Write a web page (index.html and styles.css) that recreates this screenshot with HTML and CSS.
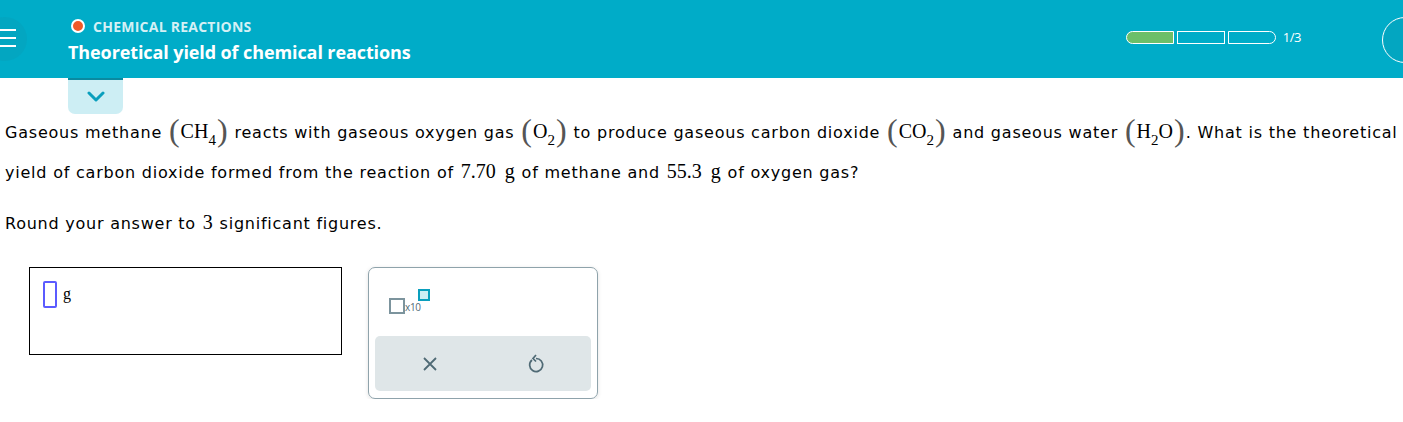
FILE: index.html
```html
<!DOCTYPE html>
<html>
<head>
<meta charset="utf-8">
<link rel="stylesheet" href="styles.css">
</head>
<body>
<header class="topbar">
  <div class="menu">
    <div class="menu-circle"></div>
    <div class="menu-lines"><span></span><span></span><span></span></div>
  </div>
  <div class="titles">
    <div class="topic"><span class="dot"></span>CHEMICAL REACTIONS</div>
    <div class="title">Theoretical yield of chemical reactions</div>
  </div>
  <div class="progress">
    <div class="seg seg-first done"></div>
    <div class="seg"></div>
    <div class="seg seg-last"></div>
    <span class="count">1/3</span>
  </div>
  <div class="avatar"></div>
</header>
<div class="tab">
  <svg width="20" height="12" viewBox="0 0 20 12"><path d="M3 2 L10 9 L17 2" fill="none" stroke="#0a9fbd" stroke-width="3" stroke-linecap="round" stroke-linejoin="round"/></svg>
</div>
<main class="content">
  <p class="question">Gaseous methane <span class="f"><span class="par">(</span>CH<sub>4</sub><span class="par">)</span></span> reacts with gaseous oxygen gas <span class="f"><span class="par">(</span>O<sub>2</sub><span class="par">)</span></span> to produce gaseous carbon dioxide <span class="f"><span class="par">(</span>CO<sub>2</sub><span class="par">)</span></span> and gaseous water <span class="f"><span class="par">(</span>H<sub>2</sub>O<span class="par">)</span></span>. What is the theoretical yield of carbon dioxide formed from the reaction of <span class="m">7.70 g</span> of methane and <span class="m">55.3 g</span> of oxygen gas?</p>
  <p class="round">Round your answer to <span class="m">3</span> significant figures.</p>
  <div class="answer-row">
    <div class="answer">
      <span class="cursor"></span><span class="unit">g</span>
    </div>
    <div class="keypad">
      <div class="sci">
        <span class="sq"></span><span class="x10">x10</span><span class="exp"></span>
      </div>
      <div class="actions">
        <svg width="16" height="16" viewBox="0 0 16 16"><path d="M2 2 L14 14 M14 2 L2 14" stroke="#4f6a75" stroke-width="1.8" fill="none"/></svg>
        <svg width="18" height="20" viewBox="0 0 18 20"><path d="M5 6 A6.5 6.5 0 1 0 9 4.5" fill="none" stroke="#4f6a75" stroke-width="1.7"/><path d="M9 1 L6 4.5 L9 7.5" fill="none" stroke="#4f6a75" stroke-width="1.7"/></svg>
      </div>
    </div>
  </div>
</main>
</body>
</html>
```

FILE: styles.css
```css
* { box-sizing: border-box; }
body {
  margin: 0;
  font-family: "DejaVu Sans", Verdana, sans-serif;
  color: #000;
  background: #fff;
  overflow: hidden;
}
.topbar {
  height: 78px;
  background: #00acc8;
  display: flex;
  align-items: flex-start;
  position: relative;
  overflow: hidden;
}
.menu {
  width: 68px;
  height: 78px;
  position: relative;
  flex: none;
}
.menu-circle {
  position: absolute;
  left: -17px;
  top: 17px;
  width: 44px;
  height: 44px;
  border-radius: 50%;
  background: #03a6c1;
}
.menu-lines {
  position: absolute;
  left: 0;
  top: 29px;
  display: flex;
  flex-direction: column;
  gap: 6px;
}
.menu-lines span {
  display: block;
  width: 16px;
  height: 2px;
  background: #fff;
}
.titles {
  padding-top: 17px;
  font-family: "Open Sans", sans-serif;
  color: #fff;
  flex: none;
}
.topic {
  display: flex;
  align-items: center;
  font-size: 14px;
  font-weight: 700;
  color: #d4f0f5;
  letter-spacing: 0.25px;
  height: 18px;
}
.dot {
  width: 14px;
  height: 14px;
  border-radius: 50%;
  background: #f05a28;
  border: 2px solid #fff;
  margin: 0 8px 0 3px;
}
.title {
  margin-top: 5px;
  font-size: 18px;
  font-weight: 700;
  letter-spacing: -0.1px;
}
.progress {
  margin-left: auto;
  margin-top: 28px;
  display: flex;
  align-items: center;
  gap: 3px;
  flex: none;
}
.seg {
  width: 48px;
  height: 13px;
  border: 1px solid #fff;
}
.seg.done { background: #6cbf69; }
.seg-first { border-radius: 7px 0 0 7px; }
.seg-last { border-radius: 0 7px 7px 0; }
.count {
  color: #fff;
  font-family: "Open Sans", sans-serif;
  font-size: 13px;
  margin-left: 4px;
  letter-spacing: -0.5px;
}
.avatar {
  margin-left: 81px;
  margin-top: 17px;
  width: 46px;
  height: 46px;
  border-radius: 50%;
  border: 1px solid #fff;
  background: #03a6c1;
  flex: none;
  margin-right: -25px;
}
.tab {
  margin-left: 68px;
  width: 55px;
  height: 36px;
  background: #cdeef4;
  border-top: 2px solid #0a8aa0;
  border-radius: 0 0 7px 7px;
  display: flex;
  justify-content: center;
  align-items: center;
}
.content {
  padding-left: 5px;
}
.question {
  margin: -2px -10px 0 0;
  font-size: 16px;
  line-height: 39px;
  letter-spacing: 0.78px;
}
.f {
  font-family: "Liberation Serif", "Times New Roman", serif;
  font-size: 20px;
  letter-spacing: 0;
  white-space: nowrap;
}
.par {
  font-size: 32px;
  color: #555;
  vertical-align: -3px;
  line-height: 0;
  margin: 0 1px;
}
.f sub {
  font-size: 15px;
  vertical-align: -7px;
  line-height: 0;
}
.m {
  font-family: "Liberation Serif", "Times New Roman", serif;
  font-size: 20px;
  letter-spacing: 0;
  word-spacing: 4px;
  margin: 0 1px;
}
.round {
  margin: 11px 0 0 0;
  font-size: 16px;
  line-height: 38px;
  letter-spacing: 0.76px;
}
.answer-row {
  display: flex;
  align-items: flex-start;
  gap: 26px;
  margin-top: 24px;
  padding-left: 24px;
}
.answer {
  width: 313px;
  height: 88px;
  border: 1px solid #000;
  display: flex;
  align-items: flex-start;
  padding: 13px 0 0 13px;
}
.cursor {
  width: 14px;
  height: 27px;
  border: 2px solid #5b5bff;
  border-radius: 2px;
}
.unit {
  font-family: "Liberation Serif", serif;
  font-size: 16px;
  margin-left: 6px;
  margin-top: 4px;
}
.keypad {
  width: 230px;
  height: 132px;
  border: 1px solid #8fa3ab;
  border-radius: 7px;
  box-shadow: 0 1px 4px rgba(0,0,0,0.12);
  padding: 0 6px 7px 6px;
  display: flex;
  flex-direction: column;
  justify-content: space-between;
}
.sci {
  display: flex;
  align-items: flex-end;
  margin: 21px 0 0 14px;
  height: 25px;
  position: relative;
}
.sq {
  width: 16px;
  height: 16px;
  border: 2px solid #7c949d;
}
.x10 {
  font-family: "Open Sans", sans-serif;
  font-size: 10px;
  color: #4f6a75;
  line-height: 10px;
  margin-bottom: 2px;
  letter-spacing: -0.3px;
}
.exp {
  width: 12px;
  height: 12px;
  border: 2px solid #0a9fbd;
  background: #cdeef4;
  align-self: flex-start;
  margin-left: -3px;
}
.actions {
  height: 55px;
  background: #dfe6e8;
  border-radius: 5px;
  display: flex;
  justify-content: space-around;
  align-items: center;
  padding: 0 2px;
}
```
